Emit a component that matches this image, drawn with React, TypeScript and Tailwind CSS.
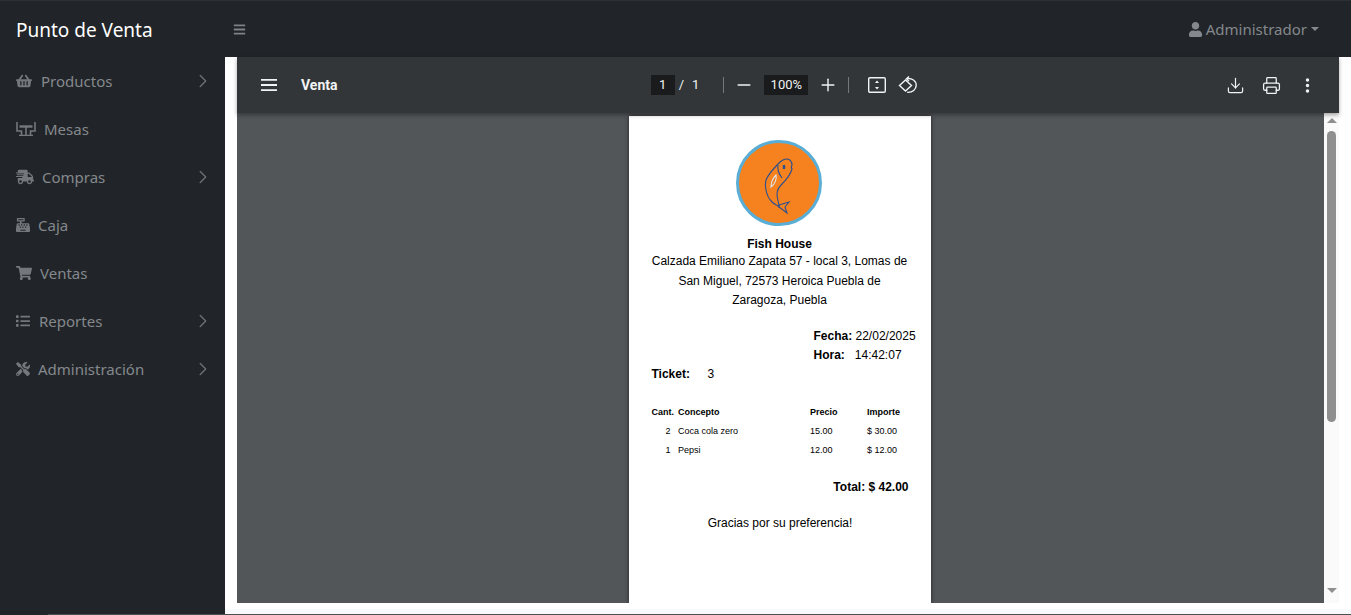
import { ChevronRight, Download, Minus, Plus, Printer, EllipsisVertical } from "lucide-react";
import {
  FaBars,
  FaCashRegister,
  FaList,
  FaShippingFast,
  FaShoppingBasket,
  FaShoppingCart,
  FaTools,
  FaUser,
} from "react-icons/fa";

function TableIcon() {
  return (
    <svg width="20" height="14" viewBox="0 0 20 14" fill="none" stroke="currentColor" strokeWidth="1.6">
      <path d="M1 0v9h4.5v4.5M19 0v9h-4.5v4.5" />
      <path d="M3.5 4.5h13" strokeWidth="2.4" />
      <path d="M10 5v8.5M7 13.5h6M3 13.5h4M13 13.5h4" />
    </svg>
  );
}

const menu = [
  { label: "Productos", icon: <FaShoppingBasket size={16} />, gap: "ml-[9px]", arrow: true },
  { label: "Mesas", icon: <TableIcon />, gap: "ml-[8px]", arrow: false },
  { label: "Compras", icon: <FaShippingFast size={18} />, gap: "ml-[8px]", arrow: true },
  { label: "Caja", icon: <FaCashRegister size={14} />, gap: "ml-[8px]", arrow: false },
  { label: "Ventas", icon: <FaShoppingCart size={16} />, gap: "ml-[8px]", arrow: false },
  { label: "Reportes", icon: <FaList size={14} />, gap: "ml-[9px]", arrow: true },
  { label: "Administración", icon: <FaTools size={14} />, gap: "ml-[8px]", arrow: true },
];

function Sidebar() {
  return (
    <div className="w-[225px] shrink-0 bg-[#212529] text-[#85888c]">
      {menu.map((item) => (
        <div key={item.label} className="flex h-[48px] items-center pl-[16px] pr-[11px] text-[15px]">
          <span className="flex items-center text-[#74777b]">{item.icon}</span>
          <span className={item.gap}>{item.label}</span>
          {item.arrow && <ChevronRight size={22} strokeWidth={1.5} className="ml-auto text-[#6c6f73]" />}
        </div>
      ))}
    </div>
  );
}

function Fish() {
  return (
    <svg width="88" height="88" viewBox="0 0 88 88" className="block">
      <circle cx="44" cy="44" r="41.5" fill="#f5821f" stroke="#5aaed6" strokeWidth="3" />
      <g fill="none" stroke="#2b4f8f" strokeWidth="1.1">
        <path d="M57 26c0-3-2-6-5-6-3 0-6 2-8 4-5 5-10 10-13 17-1 4-1 7 0 10 1 5 3 9 6 12 2 2 5 3 7 5 0-4-2-9-2-13 0-4 2-7 5-10 4-4 8-8 10-15-1-1-1-2 0-4z" />
        <path d="M44 66l10-3-4 5 2 6-8-6z" />
        <path d="M36 48c0-5 2-9 5-12 1 4-1 9-5 12z" stroke="#dfe5ee" />
        <path d="M49 26l0 4" strokeWidth="2.4" />
        <path d="M43 26c-1 5 1 9 4 13" />
      </g>
    </svg>
  );
}

function Ticket() {
  return (
    <div className="h-[487px] w-[302px] shrink-0 bg-white pl-[23px] pr-[15px] text-[12px] leading-[19px] text-black shadow-[0_0_4px_rgba(0,0,0,0.6)] [font-family:'Liberation_Sans',Arial,sans-serif]">
      <div className="ml-[83px] pt-[23px]">
        <Fish />
      </div>
      <div className="mt-[8px] w-[256px] text-center">
        <div className="h-[17.3px] font-bold">Fish House</div>
        <div className="leading-[19.4px]">
          Calzada Emiliano Zapata 57 - local 3, Lomas de San Miguel, 72573 Heroica Puebla de Zaragoza, Puebla
        </div>
      </div>
      <div className="mt-[16px] ml-[162px]">
        <div className="whitespace-nowrap">
          <b>Fecha:</b> 22/02/2025
        </div>
        <div className="whitespace-nowrap">
          <b className="mr-[10px]">Hora:</b>14:42:07
        </div>
      </div>
      <div className="flex">
        <b className="w-[56px]">Ticket:</b>3
      </div>
      <div className="mt-[19px] grid grid-cols-[26.5px_132px_57px_auto] text-[9px]">
        <b>Cant.</b>
        <b>Concepto</b>
        <b>Precio</b>
        <b>Importe</b>
        <span className="pr-[7.5px] text-right">2</span>
        <span>Coca cola zero</span>
        <span>15.00</span>
        <span>$ 30.00</span>
        <span className="pr-[7.5px] text-right">1</span>
        <span>Pepsi</span>
        <span>12.00</span>
        <span>$ 12.00</span>
      </div>
      <div className="mt-[18px] w-[257px] text-right font-bold">Total: $ 42.00</div>
      <div className="mt-[17px] w-[257px] text-center">Gracias por su preferencia!</div>
    </div>
  );
}

function PdfToolbar() {
  return (
    <div className="z-10 grid h-[56px] shrink-0 grid-cols-[1fr_auto_1fr] items-center bg-[#323639] text-[#f1f3f4] shadow-[0_2px_4px_rgba(0,0,0,0.35)] [font-family:Roboto,sans-serif]">
      <div className="flex items-center pl-[24px]">
        <svg width="16" height="12" viewBox="0 0 16 12" fill="currentColor">
          <path d="M0 0h16v1.8H0zM0 5.1h16v1.8H0zM0 10.2h16V12H0z" />
        </svg>
        <span className="ml-[24px] mt-[1px] text-[14px] font-bold">Venta</span>
      </div>
      <div className="flex items-center pr-[7px] text-[13px]">
        <span className="flex h-[20px] w-[24px] items-center justify-center bg-[#191b1c]">1</span>
        <span className="ml-[4px]">/</span>
        <span className="ml-[8px]">1</span>
        <span className="ml-[24px] h-[16px] w-px bg-[#75787a]" />
        <Minus size={20} strokeWidth={1.7} className="ml-[10px]" />
        <span className="ml-[10px] flex h-[20px] w-[44px] items-center justify-center bg-[#191b1c]">100%</span>
        <Plus size={20} strokeWidth={1.7} className="ml-[10px]" />
        <span className="ml-[10px] h-[16px] w-px bg-[#75787a]" />
        <svg width="18" height="16" viewBox="0 0 18 16" fill="none" stroke="currentColor" strokeWidth="1.4" className="ml-[19px]">
          <rect x="0.7" y="0.7" width="16.6" height="14.6" rx="1.2" />
          <path d="M9 3.5l2 2.5H7zM9 12.5L7 10h4z" fill="currentColor" stroke="none" />
        </svg>
        <svg width="20" height="18" viewBox="0 0 20 18" fill="none" stroke="currentColor" strokeWidth="1.4" className="ml-[12px]">
          <path d="M1.5 9.5L7.5 4l6 5.5-6 5.5z" />
          <path d="M9 2.6c5-.6 9.2 2.2 9.2 6.7 0 4-3.6 7.4-9 7" />
          <path d="M11 0.5L8.5 2.7 11 5" />
        </svg>
      </div>
      <div className="flex items-center justify-end pr-[22px]">
        <Download size={19} strokeWidth={1.5} />
        <Printer size={19} strokeWidth={1.6} className="ml-[17px]" />
        <EllipsisVertical size={19} strokeWidth={2.4} className="ml-[17px]" />
      </div>
    </div>
  );
}

function Scrollbar() {
  return (
    <div className="flex w-[15px] shrink-0 flex-col items-center bg-[#fafafa]">
      <div className="mt-[5px] h-0 w-0 border-x-[5px] border-b-[5px] border-x-transparent border-b-[#8f8f8f]" />
      <div className="mt-[8px] h-[291px] w-[9px] rounded-[5px] bg-[#8f8f8f]" />
      <div className="mt-[166px] h-0 w-0 border-x-[5px] border-t-[5px] border-x-transparent border-t-[#8f8f8f]" />
    </div>
  );
}

export default function App() {
  return (
    <div className="flex h-[615px] w-[1351px] flex-col overflow-hidden bg-white [font-family:'Noto_Sans',sans-serif]">
      <div className="flex h-[57px] shrink-0 items-center border-t border-[#2c3034] bg-[#212529] pr-[32px]">
        <span className="ml-[16px] mt-[3px] w-[217px] text-[19px] text-white">Punto de Venta</span>
        <FaBars size={13} className="text-[#7f8286]" />
        <div className="ml-auto flex items-center text-[15px] text-[#85888c]">
          <FaUser size={15} />
          <span className="ml-[3px]">Administrador</span>
          <span className="ml-[4px] h-0 w-0 border-x-[4px] border-t-[4px] border-x-transparent border-t-[#85888c]" />
        </div>
      </div>
      <div className="flex min-h-0 flex-1">
        <Sidebar />
        <div className="flex min-w-0 flex-1 flex-col">
          <div className="flex h-[546px] shrink-0 flex-col px-[12px]">
            <PdfToolbar />
            <div className="flex min-h-0 flex-1 bg-[#525659]">
              <div className="flex min-w-0 flex-1 justify-center overflow-hidden pr-[2px] pt-[3px]">
                <Ticket />
              </div>
              <Scrollbar />
            </div>
          </div>
          <div className="mt-[6px] flex-1 bg-[#f8f9fa]" />
        </div>
      </div>
      <div className="h-px shrink-0 bg-[#212529] pl-[48px]">
        <div className="h-px bg-[#4b4f53]" />
      </div>
    </div>
  );
}
